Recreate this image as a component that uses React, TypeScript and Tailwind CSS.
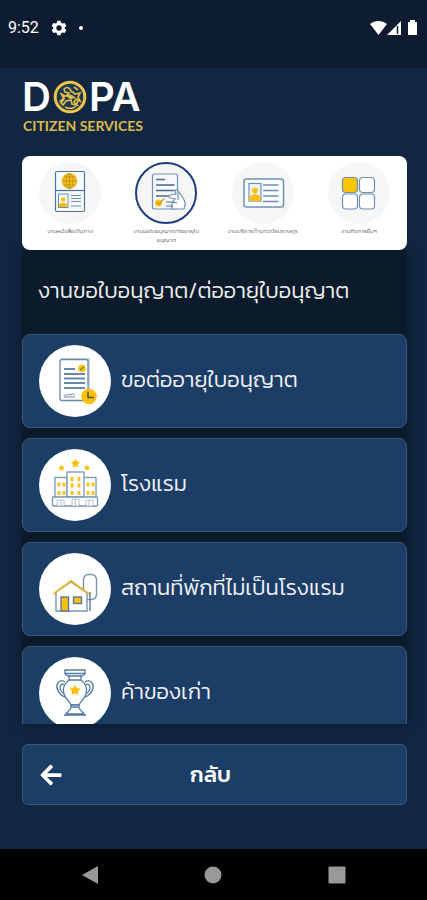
import type { ReactNode } from "react";
import { FaArrowLeft } from "react-icons/fa";

const line = "#6d91b5";
const gold = "#fdc010";

function PassportIcon() {
  return (
    <svg viewBox="0 0 62 62" className="size-full" fill="none" stroke={line} strokeWidth="1.2" aria-hidden="true">
      <rect x="16.500" y="9.500" width="29" height="40" rx="1.500" fill="#f7fafc" stroke="#4b7299" />
      <path d="M16.500 28.500h29" stroke="#4b7299" />
      <circle cx="30.500" cy="19" r="7.500" fill={gold} stroke="#dba918" strokeWidth=".6" />
      <path d="M23 19h15M30.500 11.500v15M25 15h11M25 23h11" stroke="#a98b25" strokeWidth=".8" />
      <ellipse cx="30.500" cy="19" rx="3.600" ry="7.500" stroke="#a98b25" strokeWidth=".8" />
      <rect x="19.500" y="32" width="9.500" height="13.500" stroke="#4b7299" strokeWidth=".8" />
      <circle cx="24.200" cy="37.500" r="2.300" fill={gold} stroke="none" />
      <path d="M20 45v-2c0-3 8.500-3 8.500 0v2z" fill={gold} stroke="none" />
      <path d="M32 33.500h10M32 36.500h10M32 39.500h10M32 44h10" strokeWidth="1" />
    </svg>
  );
}

function PermitIcon() {
  return (
    <svg viewBox="0 0 58 58" className="size-full" fill="none" stroke={line} strokeWidth="1.2" aria-hidden="true">
      <rect x="15.500" y="10" width="25" height="35" rx="2" fill="#f7f9fc" />
      <path d="M19 15.500h9M19 21h18.500M19 26.500h18.500M19 32h18.500" stroke="#45698f" strokeWidth="1.300" />
      <circle cx="21.500" cy="39" r="3.500" fill={gold} stroke="none" />
      <path d="m20 38.500 2 2 5-6" stroke="#d49b13" />
      <path d="M35 45h12c2-4 1-8-1-11l-5-7c-3-3-3 0-2 3l-6 1c-2 1-1 3 1 3l4 1-3 4z" fill="#fff" />
      <path d="M41 27v9" />
      <path d="M29 38h6l5 1M29 42h7" stroke="#4b7299" />
    </svg>
  );
}

function IdCardIcon() {
  return (
    <svg viewBox="0 0 62 62" className="size-full" fill="none" stroke={line} strokeWidth="1.2" aria-hidden="true">
      <rect x="12" y="17" width="39.500" height="28" rx="2.500" fill="#fbfdff" strokeWidth="1.500" />
      <rect x="17" y="21.500" width="12" height="17.500" fill="#edf5fc" />
      <circle cx="23" cy="28.500" r="3" fill={gold} stroke="none" />
      <path d="M17.500 39v-3c0-5 11-5 11 0v3z" fill={gold} stroke="none" />
      <path d="M31 23h15.500M31 28.500h15.500M31 34h15.500M31 39.500h15.500" strokeWidth="1.500" />
    </svg>
  );
}

function OtherIcon() {
  return (
    <svg viewBox="0 0 62 62" className="size-full" fill="#fff" stroke={line} strokeWidth="1.2" aria-hidden="true">
      <rect x="14.500" y="15.500" width="15" height="15" rx="3.500" fill="#fdc400" />
      <rect x="31.500" y="15.500" width="15" height="15" rx="3.500" />
      <rect x="14.500" y="32" width="15" height="15" rx="3.500" />
      <rect x="31.500" y="32" width="15" height="15" rx="3.500" />
    </svg>
  );
}

function RenewIcon() {
  return (
    <svg viewBox="0 0 72 72" className="size-full" fill="none" stroke="#6989aa" strokeWidth="1.3" aria-hidden="true">
      <path d="M23 14h27v35" stroke="#cbd7e4" strokeWidth="2" />
      <rect x="21" y="14.500" width="28" height="41" rx="2" fill="#fff" />
      <path d="M25 24h11M25 29h21M25 33.500h21M25 38h21M25 43h21" strokeWidth="1.800" />
      <path d="M25 51c1-3 3 0 4-1s3 0 4-1 2 2 3 1M25 52h11" strokeWidth="1" />
      <circle cx="43" cy="23.500" r="3.800" fill={gold} stroke="none" />
      <path d="m41 25 4-3" stroke="#315879" strokeWidth="1" />
      <circle cx="50" cy="51.500" r="7.800" fill={gold} stroke="none" />
      <path d="M49 46.500v6h6" stroke="#455a38" strokeWidth="1.500" />
    </svg>
  );
}

function Star({ x, y, r }: { x: number; y: number; r: number }) {
  return (
    <path
      transform={`translate(${x} ${y}) scale(${r})`}
      d="M0-1 .29-.4.95-.31.47.15.59.81 0 .5-.59.81-.47.15-.95-.31-.29-.4z"
      fill={gold}
      stroke="none"
    />
  );
}

function HotelIcon() {
  return (
    <svg viewBox="0 0 72 72" className="size-full" fill="#fff" stroke="#7596b7" strokeWidth="1.3" aria-hidden="true">
      <Star x={36.5} y={14.5} r={5} />
      <Star x={22.5} y={19} r={3.5} />
      <Star x={48} y={19} r={3.5} />
      <rect x="16" y="28.500" width="12" height="20" />
      <rect x="44" y="28.500" width="13" height="20" />
      <rect x="28" y="23" width="17" height="25" />
      <rect x="13.500" y="48" width="45" height="9" rx="1" />
      <path d="M18 57v-6h7v6M22 51v6M33 57v-7h7v7M36.500 50v7M47 57v-6h7v6M50 51v6" strokeWidth=".8" opacity=".7" />
      <path
        d="M20 33.500v4M25 33.500v4M20 42v4M25 42v4M33 28v4M40 28v4M33 34.500v4M40 34.500v4M33 42v4M40 42v4M49 33.500v4M54 33.500v4M49 42v4M54 42v4"
        stroke={gold}
        strokeWidth="2.8"
      />
    </svg>
  );
}

function HouseIcon() {
  return (
    <svg viewBox="0 0 72 72" className="size-full" fill="none" stroke="#58799b" strokeWidth="1.4" aria-hidden="true">
      <rect x="44.500" y="21.500" width="13" height="25" rx="5" stroke="#7596b7" />
      <path d="M17 39v19h31V40L32 29z" fill="#fff" stroke="#7596b7" />
      <path d="m14.500 41 17.500-13 18 13" stroke="#e5b52b" strokeWidth="2" />
      <path d="M51 39v19" />
      <rect x="22" y="44" width="7.500" height="14" fill={gold} />
      <rect x="34.500" y="44" width="8" height="6.500" fill={gold} />
    </svg>
  );
}

function VaseIcon() {
  return (
    <svg viewBox="0 0 72 72" className="size-full" fill="#fff" stroke="#537ba3" strokeWidth="1.3" aria-hidden="true">
      <path d="M26 25c-5-4-9 2-8 6 1 5 6 10 11 9M46 25c5-4 9 2 8 6-1 5-6 10-11 9" />
      <path d="M26 28c-3-2-5 0-5 3s3 6 6 6M46 28c3-2 5 0 5 3s-3 6-6 6" />
      <path d="M26 13h20v4l-3 2H29l-3-2zM30 19h12v4c5 4 7 8 5 14-2 6-6 8-7 11h-8c-1-3-5-5-7-11-2-6 0-10 5-14z" />
      <path d="M26 16.500h20M30 23h12M32 48h8v2h-8zM32 50h8c0 3 3 4 5 7H27c2-3 5-4 5-7zM25 58h22" />
      <Star x={36} y={33.5} r={6} />
    </svg>
  );
}

const tabs: { label: string; icon: ReactNode }[] = [
  { label: "งานหนังสือเดินทาง", icon: <PassportIcon /> },
  { label: "งานขอใบอนุญาต/ต่ออายุใบอนุญาต", icon: <PermitIcon /> },
  { label: "งานบริการด้านทะเบียนราษฎร", icon: <IdCardIcon /> },
  { label: "งานกิจการอื่นๆ", icon: <OtherIcon /> },
];

const services: { label: string; icon: ReactNode }[] = [
  { label: "ขอต่ออายุใบอนุญาต", icon: <RenewIcon /> },
  { label: "โรงแรม", icon: <HotelIcon /> },
  { label: "สถานที่พักที่ไม่เป็นโรงแรม", icon: <HouseIcon /> },
  { label: "ค้าของเก่า", icon: <VaseIcon /> },
];

function StatusBar() {
  return (
    <div className="flex h-[68px] shrink-0 items-start justify-between bg-[#0d1c30] px-2 pt-4 text-white">
      <div className="flex h-6 items-center gap-3 font-[Roboto,sans-serif]">
        <span className="text-base">9:52</span>
        <svg viewBox="0 0 24 24" className="size-4" fill="currentColor" aria-hidden="true">
          <path
            fillRule="evenodd"
            d="m9.500 1-.6 3.100-2.300 1.300-3-1L1 8.900l2.400 2.100v2L1 15.100l2.600 4.500 3-1 2.300 1.300.6 3.100h5l.6-3.100 2.300-1.300 3 1 2.600-4.500-2.400-2.100v-2L23 8.900l-2.600-4.500-3 1-2.300-1.300L14.500 1zM12 8a4 4 0 1 1 0 8 4 4 0 0 1 0-8"
          />
        </svg>
        <span className="size-1 rounded-full bg-white" />
      </div>
      <svg viewBox="0 0 50 16" className="mt-1 h-4 w-[50px]" fill="currentColor" aria-hidden="true">
        <path d="M1 4c5-4 12-4 17 0L9.500 15zM18 15 32 1v14z" />
        <path d="M28.500 6v8" stroke="#0d1c30" strokeWidth="1.500" />
        <path d="M39 2h2V0h5v2h2v13h-9z" />
      </svg>
    </div>
  );
}

function Logo() {
  return (
    <div className="flex flex-col">
      <div className="flex items-center gap-0.5 font-[Inter,sans-serif] text-[40px] leading-8 font-semibold text-white">
        <span>D</span>
        <svg viewBox="0 0 34 34" className="size-[34px]" fill="none" aria-label="O" role="img">
          <circle cx="17" cy="17" r="14.800" fill="#1e3851" stroke="#edc548" strokeWidth="3" />
          <path
            d="M7 13c2 2 4 1 4 4s-4 3-4 5M11 9c3-3 6-1 7 2l4 3 5-1-2 4 2 4-4-2-2 3 3 3-5-1-1-4-5 1-3 4-2-2 3-4-2-4 4 1 3-3-4-1zM21 7l4 3M12 27c4 2 8 2 11-1M25 21l-2 4"
            stroke="#e0bd4b"
            strokeWidth="1.7"
          />
          <path d="m14 14 5 1 4 3-6 1-3-2z" fill="#e0bd4b" />
        </svg>
        <span>PA</span>
      </div>
      <span className="mt-1 px-px font-[Lato,sans-serif] text-sm leading-4 font-bold text-[#dcb94b]">CITIZEN SERVICES</span>
    </div>
  );
}

export default function App() {
  return (
    <div className="flex h-screen flex-col bg-[#112641] font-[Kanit,Prompt,'Noto_Sans_Thai','Noto_Sans',sans-serif]">
      <StatusBar />
      <main className="flex min-h-0 flex-1 flex-col pt-3 pr-5 pb-11 pl-[22px]">
        <header>
          <Logo />
        </header>

        <nav className="relative z-10 mt-[22px] grid h-[94px] shrink-0 grid-cols-4 rounded-lg bg-white pt-1.5">
          {tabs.map((tab, i) => (
            <button key={tab.label} type="button" className="flex flex-col items-center">
              <span
                className={
                  i === 1
                    ? "size-[62px] rounded-full border-2 border-[#1c3d80] bg-[#f6f6f6]"
                    : "size-[62px] rounded-full bg-[#f6f6f6]"
                }
              >
                {tab.icon}
              </span>
              <span className="mt-0.5 w-[72px] text-[6px] leading-[9px] font-light text-[#62636f]">{tab.label}</span>
            </button>
          ))}
        </nav>

        <section className="flex min-h-0 flex-1 flex-col bg-[#0c1b2c] shadow-[0_0_12px_#0c1b2c]">
          <h1 className="flex h-[84px] shrink-0 items-center px-4 pb-1 text-[22px] font-light text-[#f0f0f0]">
            งานขอใบอนุญาต/ต่ออายุใบอนุญาต
          </h1>
          <ul className="flex min-h-0 flex-1 flex-col gap-2.5 overflow-hidden">
            {services.map((service) => (
              <li key={service.label} className="shrink-0">
                <button
                  type="button"
                  className="flex h-[94px] w-full items-center gap-2.5 rounded-lg border border-[#3b5878] bg-[#1c3d66] px-4 text-left text-[22px] font-light text-[#f0f2f8]"
                >
                  <span className="size-[72px] shrink-0 rounded-full bg-white">{service.icon}</span>
                  <span className="pb-1">{service.label}</span>
                </button>
              </li>
            ))}
          </ul>
        </section>

        <button
          type="button"
          className="relative mt-5 flex h-[61px] shrink-0 items-center justify-center rounded-md border border-[#3b5878] bg-[#1c3d66] pr-2 text-[22px] font-medium text-white"
        >
          <FaArrowLeft className="absolute left-4 size-6" aria-hidden="true" />
          กลับ
        </button>
      </main>

      <div className="flex h-[51px] shrink-0 items-center justify-around bg-black px-7 text-[#999]">
        <button type="button" aria-label="Back">
          <svg viewBox="0 0 18 18" className="size-[18px]" fill="currentColor">
            <path d="M17 0v18L1 9z" />
          </svg>
        </button>
        <button type="button" aria-label="Home">
          <svg viewBox="0 0 18 18" className="size-[18px]" fill="currentColor">
            <circle cx="9" cy="9" r="8.500" />
          </svg>
        </button>
        <button type="button" aria-label="Recent apps">
          <svg viewBox="0 0 18 18" className="size-[18px]" fill="currentColor">
            <rect x=".5" y=".5" width="17" height="17" rx="1" />
          </svg>
        </button>
      </div>
    </div>
  );
}
